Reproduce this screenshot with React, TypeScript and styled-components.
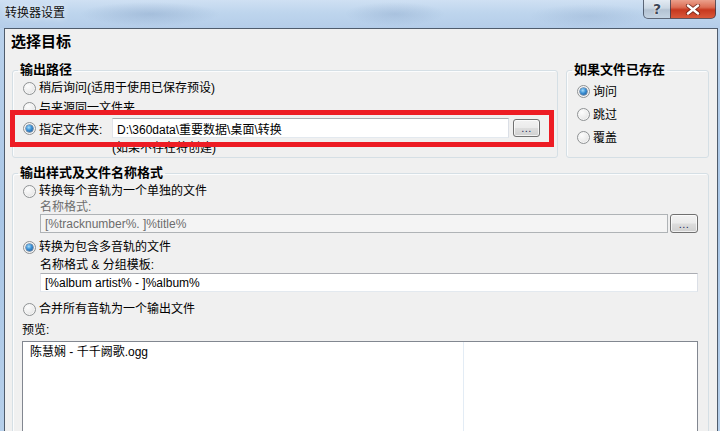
import React from 'react';
import styled, { createGlobalStyle, css } from 'styled-components';

const GlobalStyle = createGlobalStyle`
  html, body {
    margin: 0;
    padding: 0;
    background: #fff;
  }
  body {
    font-family: "Liberation Sans", "Noto Sans CJK SC", sans-serif;
    font-size: 12px;
    color: #000;
  }
  * {
    box-sizing: border-box;
  }
`;

const Window = styled.div`
  position: relative;
  width: 720px;
  height: 431px;
  display: flex;
  flex-direction: column;
  overflow: hidden;
  background: linear-gradient(180deg, #bcd3ec 0%, #a9c6e6 50%, #b6cfea 100%);
`;

const TitleBar = styled.div`
  height: 28px;
  flex: 0 0 28px;
  display: flex;
  align-items: flex-start;
  justify-content: space-between;
  padding: 0 4px 0 5px;
  background:
    radial-gradient(ellipse 70px 12px at 150px 14px, rgba(110, 140, 180, 0.3), transparent),
    radial-gradient(ellipse 50px 12px at 395px 14px, rgba(110, 140, 180, 0.25), transparent),
    radial-gradient(ellipse 60px 12px at 590px 16px, rgba(110, 140, 180, 0.2), transparent),
    linear-gradient(180deg, #cfe0f3 0%, #bed5ed 45%, #b4cde9 100%);
`;

const Title = styled.div`
  line-height: 27px;
  font-size: 12px;
  color: #111;
  text-shadow: 0 0 6px rgba(255, 255, 255, 0.9);
`;

const CaptionButtons = styled.div`
  display: flex;
  height: 19px;
`;

const CaptionButton = styled.div<{ $kind: 'help' | 'close' }>`
  height: 19px;
  display: flex;
  align-items: center;
  justify-content: center;
  border: 1px solid rgba(50, 60, 80, 0.75);
  border-top: none;
  ${(p) =>
    p.$kind === 'help'
      ? css`
          width: 27px;
          border-right: none;
          border-radius: 0 0 0 5px;
          background: linear-gradient(180deg, #e3ebf3 0%, #cbd7e3 45%, #b3c2d2 55%, #c4d3e2 100%);
          color: #3b4656;
          font: bold 14px "DejaVu Sans", sans-serif;
          text-shadow: 0 0 2px #fff, 0 0 1px #fff;
        `
      : css`
          width: 46px;
          border-radius: 0 0 5px 0;
          background: linear-gradient(180deg, #eba08c 0%, #dc6e55 40%, #c7381f 55%, #d9583a 100%);
        `}
`;

const Client = styled.div`
  flex: 1;
  min-height: 0;
  margin: 0 2px 0 4px;
  border: 1px solid #4f5c6c;
  border-bottom: none;
  background: #f0f0f0;
  padding: 3px 8px 0 7px;
  display: flex;
  flex-direction: column;
  overflow: hidden;
`;

const Heading = styled.div`
  font-size: 15px;
  font-weight: bold;
  line-height: 20px;
  margin-left: -1px;
`;

const TopRow = styled.div`
  display: flex;
  gap: 8px;
  margin-top: 10px;
`;

const GroupBox = styled.fieldset<{ $fixed?: number; $padTop?: number; $mt?: number }>`
  margin: ${(p) => p.$mt ?? 0}px 0 0 0;
  min-width: 0;
  padding: ${(p) => p.$padTop ?? 0}px 10px 1px 10px;
  border: 1px solid #d5dfe5;
  border-radius: 3px;
  box-shadow: inset 1px 1px 0 #fbfcfd;
  ${(p) =>
    p.$fixed
      ? css`
          flex: 0 0 ${p.$fixed}px;
        `
      : css`
          flex: 1 0 auto;
        `}
`;

const Legend = styled.legend`
  padding: 0 2px;
  margin-left: -5px;
  font-size: 13px;
  font-weight: bold;
  line-height: 16px;
`;

const Row = styled.div<{ $h?: number; $mt?: number; $pr?: number }>`
  display: flex;
  align-items: center;
  height: ${(p) => p.$h ?? 20}px;
  margin-top: ${(p) => p.$mt ?? 0}px;
  padding-right: ${(p) => p.$pr ?? 0}px;
`;

const Radio = styled.span<{ $checked?: boolean }>`
  position: relative;
  flex: 0 0 13px;
  width: 13px;
  height: 13px;
  border-radius: 50%;
  border: 1px solid #8f9294;
  background: radial-gradient(circle at 35% 30%, #fdfdfd 0%, #ececec 55%, #d6d6d6 100%);
  box-shadow: inset 0 0 0 1px #f6f6f6;
  ${(p) =>
    p.$checked &&
    css`
      &::after {
        content: '';
        position: absolute;
        left: 2px;
        top: 2px;
        width: 7px;
        height: 7px;
        border-radius: 50%;
        background: radial-gradient(circle at 40% 35%, #a6defc 0%, #3a8fd4 45%, #1b4f8a 100%);
        box-shadow: 0 0 0 0.5px #2a4f78;
      }
    `}
`;

const RadioText = styled.span`
  margin-left: 3px;
  line-height: 16px;
  white-space: nowrap;
`;

const FixedLabel = styled.span<{ $w: number }>`
  flex: 0 0 ${(p) => p.$w}px;
  margin-left: 3px;
  white-space: nowrap;
`;

const TextBox = styled.div<{ $disabled?: boolean; $h?: number }>`
  flex: 1;
  min-width: 0;
  height: ${(p) => p.$h ?? 20}px;
  display: flex;
  align-items: center;
  padding-left: 4px;
  border: 1px solid;
  border-color: #abadb3 #dbdfe6 #e3e9ef #e2e3ea;
  background: #fff;
  white-space: nowrap;
  overflow: hidden;
  ${(p) =>
    p.$disabled &&
    css`
      background: #f4f4f4;
      border-color: #afb3b6;
      color: #6d6d6d;
    `}
`;

const BrowseButton = styled.div<{ $w: number; $h: number; $ml: number }>`
  flex: 0 0 ${(p) => p.$w}px;
  height: ${(p) => p.$h}px;
  margin-left: ${(p) => p.$ml}px;
  border: 1px solid #707070;
  border-radius: 3px;
  background: linear-gradient(180deg, #f2f2f2 0%, #ebebeb 48%, #dddddd 52%, #cfcfcf 100%);
  box-shadow: inset 0 0 0 1px rgba(255, 255, 255, 0.7);
  display: flex;
  align-items: flex-end;
  justify-content: center;
  padding-bottom: 3px;
  font-size: 11px;
  line-height: 10px;
  letter-spacing: 0.5px;
  color: #1c2c5c;
`;

const Note = styled.div`
  margin-left: 89px;
  margin-top: 2px;
  line-height: 16px;
`;

const SubLabel = styled.div<{ $disabled?: boolean; $lh: number }>`
  margin-left: 17px;
  line-height: ${(p) => p.$lh}px;
  color: ${(p) => (p.$disabled ? '#6d6d6d' : '#000')};
`;

const SubRow = styled.div`
  display: flex;
  margin-left: 17px;
`;

const PreviewLabel = styled.div`
  margin-left: -1px;
  margin-top: 3px;
  line-height: 16px;
`;

const ListBox = styled.div`
  margin-left: -1px;
  margin-top: 3px;
  height: 120px;
  border: 1px solid #828790;
  background: #fff;
  display: grid;
  grid-template-columns: 441px 1fr;
`;

const ListColumn = styled.div<{ $divider?: boolean }>`
  padding: 2px 0 0 7px;
  line-height: 16px;
  border-right: ${(p) => (p.$divider ? '1px solid #e3ecf5' : 'none')};
`;

const RedMark = styled.div`
  position: absolute;
  left: 10px;
  top: 110px;
  width: 544px;
  height: 37px;
  border: 5px solid #ed1c24;
  pointer-events: none;
`;

const CloseGlyph = () => (
  <svg width="16" height="11" viewBox="0 0 16 11">
    <path d="M3 1.5 L13 9.5 M13 1.5 L3 9.5" stroke="rgba(90,25,15,0.7)" strokeWidth="4.2" strokeLinecap="round" />
    <path d="M3 1.5 L13 9.5 M13 1.5 L3 9.5" stroke="#fff" strokeWidth="2.4" strokeLinecap="round" />
  </svg>
);

const RadioOption = ({ checked, children }: { checked?: boolean; children: React.ReactNode }) => (
  <>
    <Radio $checked={checked} />
    <RadioText>{children}</RadioText>
  </>
);

const App = () => {
  return (
    <>
      <GlobalStyle />
      <Window>
        <TitleBar>
          <Title>转换器设置</Title>
          <CaptionButtons>
            <CaptionButton $kind="help">?</CaptionButton>
            <CaptionButton $kind="close">
              <CloseGlyph />
            </CaptionButton>
          </CaptionButtons>
        </TitleBar>

        <Client>
          <Heading>选择目标</Heading>

          <TopRow>
            <GroupBox>
              <Legend>输出路径</Legend>
              <Row>
                <RadioOption>稍后询问(适用于使用已保存预设)</RadioOption>
              </Row>
              <Row>
                <RadioOption>与来源同一文件夹</RadioOption>
              </Row>
              <Row $pr={7}>
                <Radio $checked />
                <FixedLabel $w={73}>指定文件夹:</FixedLabel>
                <TextBox>D:\360data\重要数据\桌面\转换</TextBox>
                <BrowseButton $w={27} $h={18} $ml={4}>...</BrowseButton>
              </Row>
              <Note>(如果不存在将创建)</Note>
            </GroupBox>

            <GroupBox $fixed={143} $padTop={2}>
              <Legend>如果文件已存在</Legend>
              <Row $h={23}>
                <RadioOption checked>询问</RadioOption>
              </Row>
              <Row $h={23}>
                <RadioOption>跳过</RadioOption>
              </Row>
              <Row $h={23}>
                <RadioOption>覆盖</RadioOption>
              </Row>
            </GroupBox>
          </TopRow>

          <GroupBox $mt={7}>
            <Legend>输出样式及文件名称格式</Legend>
            <Row>
              <RadioOption>转换每个音轨为一个单独的文件</RadioOption>
            </Row>
            <SubLabel $disabled $lh={13}>名称格式:</SubLabel>
            <SubRow>
              <TextBox $disabled $h={19}>[%tracknumber%. ]%title%</TextBox>
              <BrowseButton $w={28} $h={19} $ml={2}>...</BrowseButton>
            </SubRow>
            <Row $mt={4}>
              <RadioOption checked>转换为包含多音轨的文件</RadioOption>
            </Row>
            <SubLabel $lh={16}>名称格式 &amp; 分组模板:</SubLabel>
            <SubRow>
              <TextBox $h={19}>[%album artist% - ]%album%</TextBox>
            </SubRow>
            <Row $mt={7}>
              <RadioOption>合并所有音轨为一个输出文件</RadioOption>
            </Row>
            <PreviewLabel>预览:</PreviewLabel>
            <ListBox>
              <ListColumn $divider>陈慧娴 - 千千阙歌.ogg</ListColumn>
              <ListColumn />
            </ListBox>
          </GroupBox>
        </Client>

        <RedMark />
      </Window>
    </>
  );
};

export default App;
